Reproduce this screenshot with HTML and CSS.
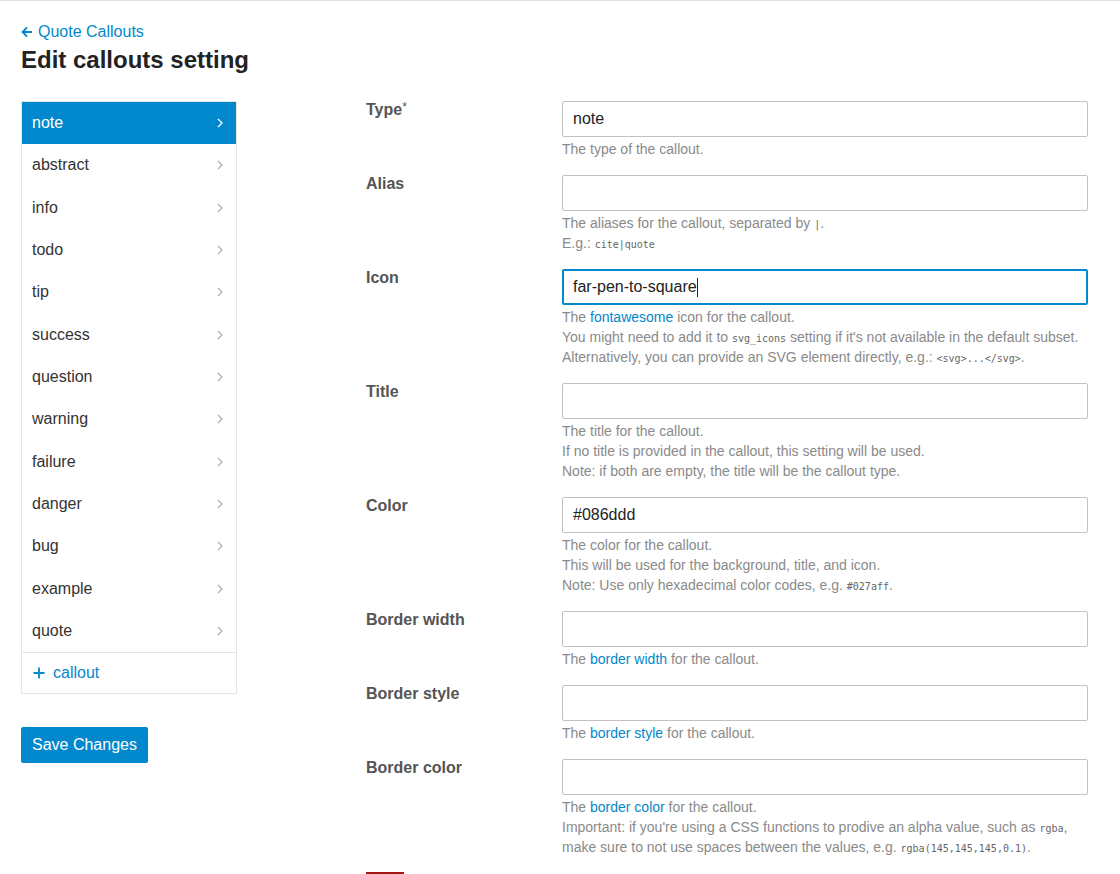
FILE: index.html
```html
<!DOCTYPE html>
<html lang="en">
<head>
<meta charset="utf-8">
<title>Edit callouts setting</title>
<link rel="stylesheet" href="styles.css">
</head>
<body>
<div class="page">
  <a class="back" href="#"><svg class="back-icon" width="12" height="12" viewBox="0 0 12 12"><path d="M11 6H2M6 1.5L1.5 6 6 10.5" fill="none" stroke="currentColor" stroke-width="1.8"/></svg>Quote Callouts</a>
  <h1 class="title">Edit callouts setting</h1>

  <div class="layout">
    <aside class="side">
      <ul class="side-list">
        <li class="side-item active"><span>note</span><svg class="chev" width="6" height="10" viewBox="0 0 6 10"><path d="M1 1l4 4-4 4" fill="none" stroke="currentColor" stroke-width="1.3"/></svg></li>
        <li class="side-item"><span>abstract</span><svg class="chev" width="6" height="10" viewBox="0 0 6 10"><path d="M1 1l4 4-4 4" fill="none" stroke="currentColor" stroke-width="1.1"/></svg></li>
        <li class="side-item"><span>info</span><svg class="chev" width="6" height="10" viewBox="0 0 6 10"><path d="M1 1l4 4-4 4" fill="none" stroke="currentColor" stroke-width="1.1"/></svg></li>
        <li class="side-item"><span>todo</span><svg class="chev" width="6" height="10" viewBox="0 0 6 10"><path d="M1 1l4 4-4 4" fill="none" stroke="currentColor" stroke-width="1.1"/></svg></li>
        <li class="side-item"><span>tip</span><svg class="chev" width="6" height="10" viewBox="0 0 6 10"><path d="M1 1l4 4-4 4" fill="none" stroke="currentColor" stroke-width="1.1"/></svg></li>
        <li class="side-item"><span>success</span><svg class="chev" width="6" height="10" viewBox="0 0 6 10"><path d="M1 1l4 4-4 4" fill="none" stroke="currentColor" stroke-width="1.1"/></svg></li>
        <li class="side-item"><span>question</span><svg class="chev" width="6" height="10" viewBox="0 0 6 10"><path d="M1 1l4 4-4 4" fill="none" stroke="currentColor" stroke-width="1.1"/></svg></li>
        <li class="side-item"><span>warning</span><svg class="chev" width="6" height="10" viewBox="0 0 6 10"><path d="M1 1l4 4-4 4" fill="none" stroke="currentColor" stroke-width="1.1"/></svg></li>
        <li class="side-item"><span>failure</span><svg class="chev" width="6" height="10" viewBox="0 0 6 10"><path d="M1 1l4 4-4 4" fill="none" stroke="currentColor" stroke-width="1.1"/></svg></li>
        <li class="side-item"><span>danger</span><svg class="chev" width="6" height="10" viewBox="0 0 6 10"><path d="M1 1l4 4-4 4" fill="none" stroke="currentColor" stroke-width="1.1"/></svg></li>
        <li class="side-item"><span>bug</span><svg class="chev" width="6" height="10" viewBox="0 0 6 10"><path d="M1 1l4 4-4 4" fill="none" stroke="currentColor" stroke-width="1.1"/></svg></li>
        <li class="side-item"><span>example</span><svg class="chev" width="6" height="10" viewBox="0 0 6 10"><path d="M1 1l4 4-4 4" fill="none" stroke="currentColor" stroke-width="1.1"/></svg></li>
        <li class="side-item"><span>quote</span><svg class="chev" width="6" height="10" viewBox="0 0 6 10"><path d="M1 1l4 4-4 4" fill="none" stroke="currentColor" stroke-width="1.1"/></svg></li>
      </ul>
      <a class="add-callout" href="#"><svg class="plus" width="12" height="12" viewBox="0 0 12 12"><path d="M6 0.5v11M0.5 6h11" fill="none" stroke="currentColor" stroke-width="1.8"/></svg>callout</a>
    </aside>

    <div class="save-wrap">
      <button class="btn-save" type="button">Save Changes</button>
    </div>

    <form class="form">
      <div class="field">
        <label class="label">Type<span class="req">*</span></label>
        <div class="control">
          <input class="input" type="text" value="note">
          <div class="help">The type of the callout.</div>
        </div>
      </div>

      <div class="field">
        <label class="label">Alias</label>
        <div class="control">
          <input class="input" type="text" value="">
          <div class="help">The aliases for the callout, separated by <code>|</code>.<br>E.g.: <code>cite|quote</code></div>
        </div>
      </div>

      <div class="field">
        <label class="label">Icon</label>
        <div class="control">
          <div class="input focused"><span>far-pen-to-square</span><span class="caret"></span></div>
          <div class="help">The <a href="#">fontawesome</a> icon for the callout.<br>You might need to add it to <code>svg_icons</code> setting if it's not available in the default subset.<br>Alternatively, you can provide an SVG element directly, e.g.: <code>&lt;svg&gt;...&lt;/svg&gt;</code>.</div>
        </div>
      </div>

      <div class="field">
        <label class="label">Title</label>
        <div class="control">
          <input class="input" type="text" value="">
          <div class="help">The title for the callout.<br>If no title is provided in the callout, this setting will be used.<br>Note: if both are empty, the title will be the callout type.</div>
        </div>
      </div>

      <div class="field">
        <label class="label">Color</label>
        <div class="control">
          <input class="input" type="text" value="#086ddd">
          <div class="help">The color for the callout.<br>This will be used for the background, title, and icon.<br>Note: Use only hexadecimal color codes, e.g. <code>#027aff</code>.</div>
        </div>
      </div>

      <div class="field">
        <label class="label">Border width</label>
        <div class="control">
          <input class="input" type="text" value="">
          <div class="help">The <a href="#">border width</a> for the callout.</div>
        </div>
      </div>

      <div class="field">
        <label class="label">Border style</label>
        <div class="control">
          <input class="input" type="text" value="">
          <div class="help">The <a href="#">border style</a> for the callout.</div>
        </div>
      </div>

      <div class="field">
        <label class="label">Border color</label>
        <div class="control">
          <input class="input" type="text" value="">
          <div class="help">The <a href="#">border color</a> for the callout.<br>Important: if you're using a CSS functions to prodive an alpha value, such as <code>rgba</code>,<br>make sure to not use spaces between the values, e.g. <code>rgba(145,145,145,0.1)</code>.</div>
        </div>
      </div>

      <div class="field field-last">
        <div class="danger-wrap"><button class="btn-danger" type="button" aria-label="Delete"></button></div>
      </div>
    </form>
  </div>
</div>
</body>
</html>
```

FILE: styles.css
```css
html, body {
  margin: 0;
  padding: 0;
  background: #fff;
}

body {
  font-family: "Liberation Sans", Arial, sans-serif;
  font-size: 16px;
  color: #333;
  border-top: 1px solid #e3e3e3;
}

a {
  color: #0288cc;
  text-decoration: none;
}

.page {
  padding: 22px 21px 40px;
}

.back {
  display: flex;
  width: fit-content;
  align-items: center;
  gap: 5px;
  font-size: 16px;
  line-height: 18px;
}

.back-icon {
  display: block;
}

.title {
  margin: 5px 0 0;
  font-size: 24px;
  line-height: 28px;
  font-weight: bold;
  color: #222;
}

.layout {
  margin-top: 27px;
  display: grid;
  grid-template-columns: 216px 1fr;
  grid-template-rows: auto 1fr;
  column-gap: 129px;
  align-items: start;
}

.side {
  grid-column: 1;
  grid-row: 1;
  border: 1px solid #e5e5e5;
}

.side-list {
  list-style: none;
  margin: 0;
  padding: 0;
}

.side-item {
  height: 42.33px;
  padding: 0 10px;
  display: flex;
  align-items: center;
  justify-content: space-between;
  color: #333;
  font-size: 16px;
}

.side-item .chev {
  color: #aaa;
  margin-right: 3px;
}

.side-item.active {
  background: #0288cc;
  color: #fff;
}

.side-item.active .chev {
  color: #fff;
}

.add-callout {
  display: flex;
  align-items: center;
  gap: 8px;
  height: 40px;
  padding: 0 11px;
  border-top: 1px solid #e5e5e5;
  font-size: 16px;
}

.plus {
  display: block;
}

.save-wrap {
  grid-column: 1;
  grid-row: 2;
  padding-top: 33px;
}

.btn-save {
  font-family: "Liberation Sans", Arial, sans-serif;
  font-size: 16px;
  color: #fff;
  background: #0288cc;
  border: none;
  border-radius: 2px;
  height: 36px;
  padding: 0 11px;
  cursor: pointer;
}

.form {
  grid-column: 2;
  grid-row: 1 / span 2;
  margin: 0;
}

.field {
  display: grid;
  grid-template-columns: 196px 526px;
  margin-bottom: 16px;
}

.field-last {
  margin-top: -1px;
}

.label {
  font-weight: bold;
  color: #555;
  font-size: 16px;
  line-height: 18px;
}

.req {
  font-weight: normal;
  font-size: 12px;
  vertical-align: top;
  line-height: 12px;
}

.input {
  box-sizing: border-box;
  display: flex;
  align-items: center;
  width: 526px;
  height: 36px;
  margin: 0;
  padding: 0 10px;
  border: 1px solid #c2c2c2;
  border-radius: 2px;
  font-family: "Liberation Sans", Arial, sans-serif;
  font-size: 16px;
  color: #222;
  background: #fff;
  outline: none;
}

.input.focused {
  border: 2px solid #0288cc;
  padding: 0 9px;
}

.caret {
  display: inline-block;
  width: 1px;
  height: 19px;
  background: #222;
}

.help {
  margin-top: 2px;
  font-size: 14px;
  line-height: 20px;
  color: #8a8a8a;
}

.help code {
  font-family: "DejaVu Sans Mono", "Liberation Mono", monospace;
  font-size: 10px;
  line-height: 1;
  color: #666;
}

.danger-wrap {
  grid-column: 1;
}

.btn-danger {
  display: block;
  width: 38px;
  height: 30px;
  background: #c62828;
  border: none;
  border-top: 2px solid #a31515;
  border-radius: 0;
  padding: 0;
}
```
